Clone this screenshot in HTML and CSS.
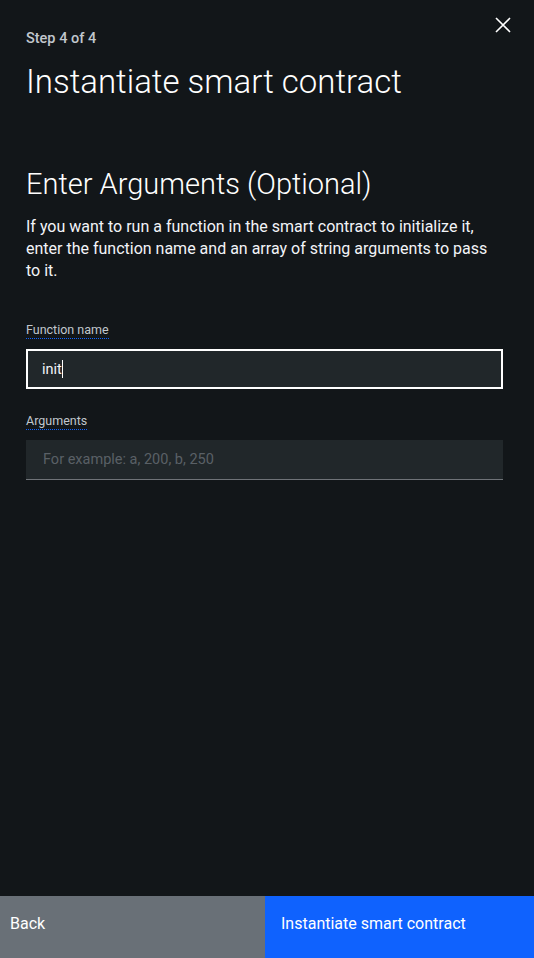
FILE: index.html
```html
<!DOCTYPE html>
<html lang="en">
<head>
<meta charset="utf-8">
<title>Instantiate smart contract</title>
<link rel="stylesheet" href="styles.css">
</head>
<body>
<div class="panel">
  <div class="content">
    <div class="header">
      <div class="step">Step 4 of 4</div>
      <button class="close" aria-label="Close">
        <svg width="16" height="16" viewBox="0 0 16 16"><path d="M1 1 L15 15 M15 1 L1 15" stroke="#fff" stroke-width="1.6" fill="none"/></svg>
      </button>
    </div>
    <h1 class="title">Instantiate smart contract</h1>
    <h2 class="subtitle">Enter Arguments (Optional)</h2>
    <p class="desc">If you want to run a function in the smart contract to initialize it, enter the function name and an array of string arguments to pass to it.</p>
    <div class="field">
      <label class="label">Function name</label>
      <div class="input focused"><span class="value">init</span><span class="caret"></span></div>
    </div>
    <div class="field">
      <label class="label">Arguments</label>
      <div class="input"><span class="placeholder">For example: a, 200, b, 250</span></div>
    </div>
  </div>
  <div class="footer">
    <button class="btn secondary">Back</button>
    <button class="btn primary">Instantiate smart contract</button>
  </div>
</div>
</body>
</html>
```
FILE: styles.css
```css
* { box-sizing: border-box; }
html, body { margin: 0; padding: 0; height: 100%; }
body {
  background: #121619;
  color: #f2f4f8;
  font-family: Roboto, "Noto Sans", "Liberation Sans", sans-serif;
}
.panel {
  height: 958px;
  display: flex;
  flex-direction: column;
}
.content {
  flex: 1;
  padding: 0 31px 0 26px;
}
.header {
  display: flex;
  justify-content: space-between;
  align-items: flex-start;
  padding-top: 30px;
}
.step {
  font-size: 14.5px;
  font-weight: 500;
  color: #c1c7cd;
  line-height: 18px;
}
.close {
  background: none;
  border: 0;
  padding: 0;
  margin-top: -13px;
  margin-right: -8px;
  width: 16px;
  height: 16px;
  cursor: pointer;
}
.title {
  margin: 14px 0 0;
  font-size: 33px;
  font-weight: 300;
  line-height: 40px;
  color: #fff;
}
.subtitle {
  margin: 64px 0 0;
  font-size: 29px;
  font-weight: 300;
  line-height: 36px;
  color: #fff;
}
.desc {
  margin: 14px 0 0;
  font-size: 16px;
  line-height: 22px;
  color: #f2f4f8;
}
.field { margin-top: 37px; }
.field + .field { margin-top: 21px; }
.label {
  display: inline-block;
  font-size: 12.5px;
  line-height: 16px;
  color: #c1c7cd;
  border-bottom: 1px dotted #0f62fe;
  margin-bottom: 10px;
}
.input {
  height: 40px;
  background: #21272a;
  border-bottom: 1px solid #6f7378;
  padding: 0 17px;
  display: flex;
  align-items: center;
  font-size: 14.5px;
}
.input.focused {
  border: 2px solid #fff;
  padding: 0 14px;
}
.value { color: #f2f4f8; }
.caret {
  display: inline-block;
  width: 1px;
  height: 18px;
  background: #fff;
}
.placeholder { color: #5a6066; }
.footer {
  display: flex;
  height: 62px;
}
.btn {
  border: 0;
  margin: 0;
  font-family: inherit;
  font-size: 16px;
  color: #fff;
  text-align: left;
  padding: 0 16px 8px 10px;
  cursor: pointer;
}
.secondary {
  width: 265px;
  background: #697077;
}
.primary {
  flex: 1;
  background: #0f62fe;
  padding-left: 16px;
}
```
